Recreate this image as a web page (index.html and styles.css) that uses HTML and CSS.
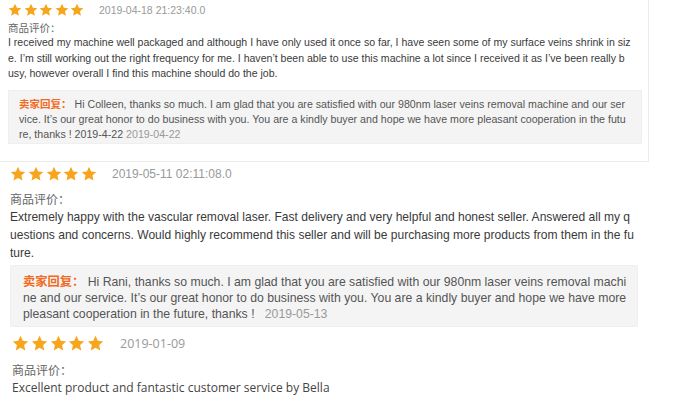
FILE: index.html
```html
<!DOCTYPE html>
<html lang="zh">
<head>
<meta charset="utf-8">
<title>Reviews</title>
<link rel="stylesheet" href="styles.css">
</head>
<body>
<svg class="defs" width="0" height="0" aria-hidden="true">
  <symbol id="star" viewBox="0 0 24 24">
    <polygon points="12,1.2 15.2,8.2 22.8,9 17.1,14.2 18.7,21.8 12,17.9 5.3,21.8 6.9,14.2 1.2,9 8.8,8.2" fill="#f7a51c"/>
  </symbol>
</svg>

<section class="review r1">
  <div class="head">
    <span class="stars">
      <svg class="star"><use href="#star"/></svg><svg class="star"><use href="#star"/></svg><svg class="star"><use href="#star"/></svg><svg class="star"><use href="#star"/></svg><svg class="star"><use href="#star"/></svg>
    </span>
    <span class="date">2019-04-18 21:23:40.0</span>
  </div>
  <div class="label">商品评价：</div>
  <div class="body">
    <span class="ln">I received my machine well packaged and although I have only used it once so far, I have seen some of my surface veins shrink in siz</span>
    <span class="ln">e. I’m still working out the right frequency for me. I haven’t been able to use this machine a lot since I received it as I’ve been really b</span>
    <span class="ln">usy, however overall I find this machine should do the job.</span>
  </div>
  <div class="reply">
    <span class="ln"><b class="rl">卖家回复：</b> Hi Colleen, thanks so much. I am glad that you are satisfied with our 980nm laser veins removal machine and our ser</span>
    <span class="ln">vice. It’s our great honor to do business with you. You are a kindly buyer and hope we have more pleasant cooperation in the futu</span>
    <span class="ln">re, thanks ! 2019-4-22 <span class="rdate">2019-04-22</span></span>
  </div>
</section>

<section class="review r2">
  <div class="head">
    <span class="stars">
      <svg class="star"><use href="#star"/></svg><svg class="star"><use href="#star"/></svg><svg class="star"><use href="#star"/></svg><svg class="star"><use href="#star"/></svg><svg class="star"><use href="#star"/></svg>
    </span>
    <span class="date">2019-05-11 02:11:08.0</span>
  </div>
  <div class="label">商品评价：</div>
  <div class="body">
    <span class="ln">Extremely happy with the vascular removal laser. Fast delivery and very helpful and honest seller. Answered all my q</span>
    <span class="ln">uestions and concerns. Would highly recommend this seller and will be purchasing more products from them in the fu</span>
    <span class="ln">ture.</span>
  </div>
  <div class="reply">
    <span class="ln"><b class="rl">卖家回复：</b> Hi Rani, thanks so much. I am glad that you are satisfied with our 980nm laser veins removal machi</span>
    <span class="ln">ne and our service. It’s our great honor to do business with you. You are a kindly buyer and hope we have more</span>
    <span class="ln">pleasant cooperation in the future, thanks !&nbsp;&nbsp; <span class="rdate">2019-05-13</span></span>
  </div>
</section>

<section class="review r3">
  <div class="head">
    <span class="stars">
      <svg class="star"><use href="#star"/></svg><svg class="star"><use href="#star"/></svg><svg class="star"><use href="#star"/></svg><svg class="star"><use href="#star"/></svg><svg class="star"><use href="#star"/></svg>
    </span>
    <span class="date">2019-01-09</span>
  </div>
  <div class="label">商品评价：</div>
  <div class="body">
    <span class="ln">Excellent product and fantastic customer service by Bella</span>
  </div>
</section>
</body>
</html>
```

FILE: styles.css
```css
html, body {
  margin: 0;
  padding: 0;
  background: #fff;
}
body {
  width: 700px;
  height: 400px;
  overflow: hidden;
  font-family: "Liberation Sans", Arial, "Noto Sans CJK SC", sans-serif;
  color: #3a3a3a;
}
.defs { position: absolute; }

.review { box-sizing: border-box; }
.head {
  display: flex;
  align-items: center;
}
.stars {
  display: flex;
  align-items: center;
}
.star { display: block; }
.date { color: #999; }
.label {
  color: #666;
  font-family: "Noto Sans CJK SC", sans-serif;
}
.ln {
  display: block;
  white-space: nowrap;
}
.reply {
  background: #f4f4f4;
  border: 1px solid #efefef;
  box-sizing: border-box;
  color: #555;
}
.rl {
  color: #f26a22;
  font-family: "Noto Sans CJK SC", sans-serif;
  font-weight: bold;
}
.rdate { color: #999; }

/* review 1 */
.r1 {
  width: 649px;
  height: 162px;
  padding: 2px 7px 0 8px;
  border-right: 1px solid #ececec;
  border-bottom: 1px solid #ececec;
}
.r1 .head { height: 16px; gap: 15px; }
.r1 .stars { gap: 1.5px; }
.r1 .star { width: 14px; height: 14px; }
.r1 .date { font-size: 10.5px; }
.r1 .label { font-size: 10.5px; line-height: 15px; margin-top: 2px; }
.r1 .body { font-size: 10.55px; line-height: 15.5px; }
.r1 .reply {
  margin-top: 8px;
  width: 634px;
  height: 54px;
  padding: 5px 0 0 10px;
  font-size: 10.65px;
  line-height: 15px;
}
.r1 .rl { font-size: 10.5px; }

/* review 2 */
.r2 {
  height: 168px;
  padding: 4px 0 0 10px;
}
.r2 .head { height: 16px; gap: 15px; }
.r2 .stars { gap: 1.75px; }
.r2 .star { width: 16px; height: 16px; }
.r2 .date { font-size: 12px; }
.r2 .label { font-size: 12px; line-height: 18px; margin-top: 8px; }
.r2 .body { font-size: 12.05px; line-height: 18px; }
.r2 .reply {
  margin-top: 3px;
  width: 628px;
  height: 62px;
  padding: 7px 0 0 12px;
  font-size: 12.25px;
  line-height: 16px;
}
.r2 .rl { font-size: 12.25px; }

/* review 3 */
.r3 {
  padding: 4px 0 0 12px;
}
.r3 .head { height: 18px; gap: 16px; }
.r3 .stars { gap: 1.75px; }
.r3 .star { width: 17px; height: 17px; }
.r3 .date { font-size: 12.5px; font-family: "Open Sans", sans-serif; }
.r3 .label { font-size: 12px; line-height: 18px; margin-top: 9px; }
.r3 .body {
  font-family: "Open Sans", sans-serif;
  font-size: 12px;
  line-height: 18px;
  color: #444;
}
```
